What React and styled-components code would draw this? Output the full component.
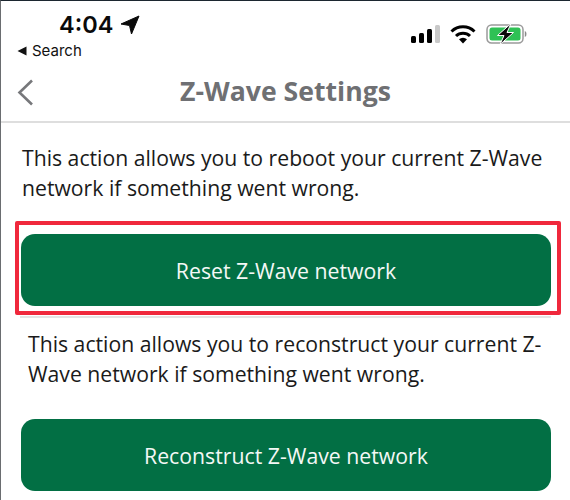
import React from 'react'
import styled, { createGlobalStyle } from 'styled-components'

const GlobalStyle = createGlobalStyle`
  html, body {
    margin: 0;
    padding: 0;
    background: #fff;
  }
`

const Screen = styled.div`
  width: 570px;
  height: 500px;
  box-sizing: border-box;
  overflow: hidden;
  background: #fff;
  border-top: 1px solid #1c2730;
  border-left: 1px solid #6a6d70;
  font-family: "Open Sans", sans-serif;
`

const StatusBar = styled.div`
  height: 59px;
  display: flex;
  justify-content: space-between;
  padding: 7px 0 0 16px;
  box-sizing: border-box;
`

const StatusLeft = styled.div`
  display: flex;
  flex-direction: column;
`

const Clock = styled.div`
  display: flex;
  align-items: center;
  gap: 7px;
  padding-left: 42px;
  height: 34px;
  font: 600 23.5px/34px Inter, sans-serif;
  color: #0a0a0a;
`

const BackToApp = styled.div`
  display: flex;
  align-items: center;
  gap: 5px;
  font: 400 15px/18px Inter, sans-serif;
  color: #111;
`

const StatusRight = styled.div`
  display: flex;
  align-items: center;
  gap: 10px;
  padding: 9px 42px 0 0;
  height: 34px;
`

const NavBar = styled.div`
  height: 63px;
  display: flex;
  align-items: center;
  justify-content: center;
  position: relative;
  border-bottom: 2px solid #dedede;
  box-sizing: border-box;
`

const BackIcon = styled.svg`
  position: absolute;
  left: 16px;
  top: 19px;
`

const Title = styled.h1`
  margin: 0;
  font-size: 26.6px;
  font-weight: 700;
  color: #6f7073;
`

const Notice = styled.p`
  margin: 0;
  padding: ${p => p.$top}px 12px 0 ${p => p.$left}px;
  font-size: 21.2px;
  line-height: 30px;
  color: #1a1a1a;
`

const Highlight = styled.div`
  position: relative;
  margin: 18px 0 0 14px;
  width: 546px;
  height: 94px;
  box-sizing: border-box;
  border: 4px solid #f0283c;
  border-radius: 2px;
  padding: 9px 0 0 2px;

  &::after {
    content: '';
    position: absolute;
    left: 1px;
    right: 6px;
    bottom: -7px;
    height: 2px;
    background: #e4e4e4;
  }
`

const ActionButton = styled.div`
  width: 530px;
  height: 72px;
  display: flex;
  align-items: center;
  justify-content: center;
  margin-left: ${p => p.$left || 0}px;
  margin-top: ${p => p.$top || 0}px;
  background: #026f44;
  border-radius: 14px;
  color: #f4f8f6;
  font-size: 21.25px;
`

const Arrow = () => (
  <svg width="20" height="20" viewBox="0 0 20 20">
    <path d="M19 1 L1 9 L9.5 10.5 L11.5 19 Z" fill="#0a0a0a" stroke="#0a0a0a" strokeWidth="1" strokeLinejoin="round" />
  </svg>
)

const SmallBack = () => (
  <svg width="10" height="10" viewBox="0 0 10 10">
    <path d="M9.5 0.5 V9.5 L0.5 5 Z" fill="#111" />
  </svg>
)

const Signal = () => (
  <svg width="29" height="18" viewBox="0 0 29 18">
    <rect x="0" y="11" width="5" height="7" rx="1.5" fill="#000" />
    <rect x="8" y="8" width="5" height="10" rx="1.5" fill="#000" />
    <rect x="16" y="4" width="5" height="14" rx="1.5" fill="#000" />
    <rect x="24" y="0" width="5" height="18" rx="1.5" fill="#c9c9c9" />
  </svg>
)

const Wifi = () => (
  <svg width="26" height="19" viewBox="0 0 26 19">
    <path d="M1.5 6.5 A16.5 16.5 0 0 1 24.5 6.5" fill="none" stroke="#000" strokeWidth="3" />
    <path d="M6 11 A10 10 0 0 1 20 11" fill="none" stroke="#000" strokeWidth="3" />
    <path d="M9 14.3 A6 6 0 0 1 17 14.3 L13 18.5 Z" fill="#000" />
  </svg>
)

const Battery = () => (
  <svg width="42" height="22" viewBox="0 0 42 22">
    <rect x="1" y="2" width="36" height="18" rx="4.5" fill="none" stroke="#9a9a9a" strokeWidth="1.5" />
    <rect x="3.5" y="4.5" width="31" height="13" rx="2.5" fill="#2fc155" />
    <path d="M38.8 8 C41 8.5 41 13.5 38.8 14 Z" fill="#8a8a8a" />
    <path d="M25 0.5 L11.5 12.5 H18 L14 21.5 L27.5 9.5 H21 Z" fill="#0a0a0a" stroke="#fff" strokeWidth="1" strokeLinejoin="round" />
  </svg>
)

export default function App() {
  return (
    <>
      <GlobalStyle />
      <Screen>
        <StatusBar>
          <StatusLeft>
            <Clock>
              4:04
              <Arrow />
            </Clock>
            <BackToApp>
              <SmallBack />
              Search
            </BackToApp>
          </StatusLeft>
          <StatusRight>
            <Signal />
            <Wifi />
            <Battery />
          </StatusRight>
        </StatusBar>
        <NavBar>
          <BackIcon width="18" height="28" viewBox="0 0 18 28">
            <path d="M15 1.5 L2.5 13.5 L15 25.5" fill="none" stroke="#77787b" strokeWidth="2.6" />
          </BackIcon>
          <Title>Z-Wave Settings</Title>
        </NavBar>
        <Notice $top={20} $left={21}>
          This action allows you to reboot your current Z-Wave network if something went wrong.
        </Notice>
        <Highlight>
          <ActionButton>Reset Z-Wave network</ActionButton>
        </Highlight>
        <Notice $top={14} $left={27}>
          This action allows you to reconstruct your current Z-Wave network if something went wrong.
        </Notice>
        <ActionButton $left={20} $top={30}>Reconstruct Z-Wave network</ActionButton>
      </Screen>
    </>
  )
}
